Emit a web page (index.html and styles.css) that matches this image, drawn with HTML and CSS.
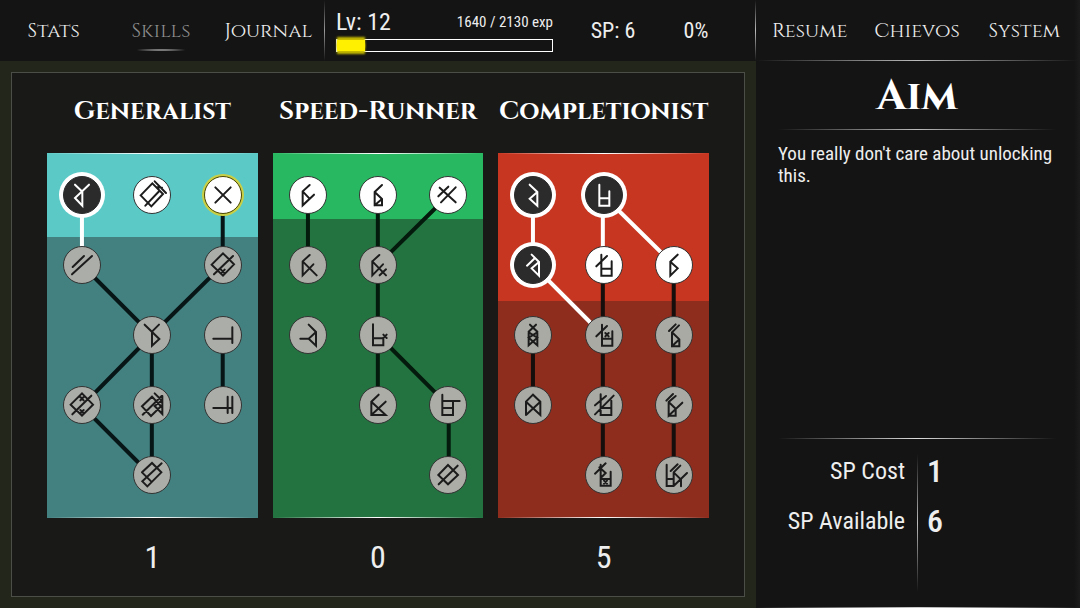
FILE: index.html
```html
<!DOCTYPE html>
<html lang="en">
<head>
<meta charset="utf-8">
<title>Skills</title>
<link rel="stylesheet" href="styles.css">
</head>
<body>
<div class="app">
  <section class="main">
    <header class="topbar">
      <nav class="tabs">
        <button class="tab">Stats</button>
        <button class="tab tab-active">Skills</button>
        <button class="tab">Journal</button>
      </nav>
      <div class="status">
        <div class="level">
          <div class="level-text"><span class="level-number">Lv: 12</span><span class="level-exp">1640 / 2130 exp</span></div>
          <div class="bar"><div class="bar-fill" style="width:13%"></div></div>
        </div>
        <span class="points">SP: 6</span>
        <span class="percent">0%</span>
      </div>
    </header>
    <main class="stage">
      <div class="frame">
        <section class="branch">
          <h2 class="branch-title">Generalist</h2>
          <div class="tree tree-teal" style="--open:23%">
            <svg class="edges" viewBox="0 0 211 365" preserveAspectRatio="none">
              <path d="M176 42V112L105 182L35 253L105 323M35 112L105 182V323M176 182V253"/>
              <path class="edge-owned" d="M35 42V100"/>
            </svg>
            <button class="node owned c1 r1" aria-label="Skill"><svg viewBox="-54 -54 108 108"><path d="M-21 -31L1 -10V32L-21 9L21 -31"/></svg></button>
            <button class="node open c2 r1" aria-label="Skill"><svg viewBox="-54 -54 108 108"><path d="M-34 1L1 -35L33 -3L-2 34ZM-20 32L22 -12M8 -41L42 -6M12 -24L30 -22"/></svg></button>
            <button class="node open selected c3 r1" aria-label="Aim"><svg viewBox="-54 -54 108 108"><path d="M-23 -23L23 23M23 -23L-23 23"/></svg></button>
            <button class="node c1 r2" aria-label="Skill"><svg viewBox="-54 -54 108 108"><path d="M-28 6L6 -27M-30 28L30 -27"/></svg></button>
            <button class="node c3 r2" aria-label="Skill"><svg viewBox="-54 -54 108 108"><path d="M0 -35L33 -2L0 32L-34 -1ZM30 -27L-27 28M-6 14L5 25M5 14L-6 25"/></svg></button>
            <button class="node c2 r3" aria-label="Skill"><svg viewBox="-54 -54 108 108"><path d="M-22 -31L22 12L0 32V-10L21 -31"/></svg></button>
            <button class="node c3 r3" aria-label="Skill"><svg viewBox="-54 -54 108 108"><path d="M-29 11H28M28 -23V24"/></svg></button>
            <button class="node c1 r4" aria-label="Skill"><svg viewBox="-54 -54 108 108"><path d="M0 -35L33 -1L0 32L-34 -1ZM28 -28L-29 28M-5 -24L5 -14M5 -24L-5 -14M-5 15L5 25M5 15L-5 25"/></svg></button>
            <button class="node c2 r4" aria-label="Skill"><svg viewBox="-54 -54 108 108"><path d="M-30 4L0 -25L27 4L-3 33ZM-28 29L29 -27M8 -35L31 -12M31 -27V27L8 3L31 -15"/></svg></button>
            <button class="node c3 r4" aria-label="Skill"><svg viewBox="-54 -54 108 108"><path d="M-29 9H28M28 -25V24M14 -25V24"/></svg></button>
            <button class="node c2 r5" aria-label="Skill"><svg viewBox="-54 -54 108 108"><path d="M-30 -8L0 -36L28 -8L-14 34L-29 19L29 -35M-30 -8L-2 20"/></svg></button>
          </div>
          <p class="branch-count">1</p>
        </section>
        <section class="branch">
          <h2 class="branch-title">Speed-Runner</h2>
          <div class="tree tree-green" style="--open:18%">
            <svg class="edges" viewBox="0 0 211 365" preserveAspectRatio="none">
              <path d="M35 42V112M105 42V253M176 42L105 112M105 182L176 253V323"/>
            </svg>
            <button class="node open c1 r1" aria-label="Skill"><svg viewBox="-54 -54 108 108"><path d="M5 -30L-16 -11V31L18 -1M-16 -11L4 10"/></svg></button>
            <button class="node open c2 r1" aria-label="Skill"><svg viewBox="-54 -54 108 108"><path d="M12 -30L-10 -9V31H12V12L-10 -9M-10 31L12 12"/></svg></button>
            <button class="node open c3 r1" aria-label="Skill"><svg viewBox="-54 -54 108 108"><path d="M-25 -22L23 22M23 -23L-21 22M-29 4L1 -25"/></svg></button>
            <button class="node c1 r2" aria-label="Skill"><svg viewBox="-54 -54 108 108"><path d="M5 -30L-16 -11V31L16 -2M-16 -11L26 31"/></svg></button>
            <button class="node c2 r2" aria-label="Skill"><svg viewBox="-54 -54 108 108"><path d="M4 -30L-17 -11V31L15 -2M-17 -11L24 31M24 13L5 31"/></svg></button>
            <button class="node c1 r3" aria-label="Skill"><svg viewBox="-54 -54 108 108"><path d="M2 -31L24 -9V32L2 11L24 -9M2 11H-23"/></svg></button>
            <button class="node c2 r3" aria-label="Skill"><svg viewBox="-54 -54 108 108"><path d="M-15 -32V31H16V8M-15 10H16M16 -1L26 9M26 -1L16 9"/></svg></button>
            <button class="node c2 r4" aria-label="Skill"><svg viewBox="-54 -54 108 108"><path d="M2 -31L-20 -10V30H23L-20 -10M-20 30L23 -10"/></svg></button>
            <button class="node c3 r4" aria-label="Skill"><svg viewBox="-54 -54 108 108"><path d="M-17 -31V30H15V-12M-17 -12H35M-17 9H15"/></svg></button>
            <button class="node c3 r5" aria-label="Skill"><svg viewBox="-54 -54 108 108"><path d="M0 -30L30 0L0 28L-29 0ZM29 -28L-28 28"/></svg></button>
          </div>
          <p class="branch-count">0</p>
        </section>
        <section class="branch">
          <h2 class="branch-title">Completionist</h2>
          <div class="tree tree-red" style="--open:40.5%">
            <svg class="edges" viewBox="0 0 211 365" preserveAspectRatio="none">
              <path d="M105 112V323M176 112V323M35 182V253"/>
              <path class="edge-owned" d="M35 42V112L94 171M105 42V100M105 42L166 102"/>
            </svg>
            <button class="node owned c1 r1" aria-label="Skill"><svg viewBox="-54 -54 108 108"><path d="M-10 -31L13 -9V32L-10 11L13 -9"/></svg></button>
            <button class="node owned c2 r1" aria-label="Skill"><svg viewBox="-54 -54 108 108"><path d="M-14 -31V32H16V-11M-14 10H16"/></svg></button>
            <button class="node owned c1 r2" aria-label="Skill"><svg viewBox="-54 -54 108 108"><path d="M-4 -31L18 -9V32L-4 10L18 -9M-18 2L6 -21"/></svg></button>
            <button class="node open c2 r2" aria-label="Skill"><svg viewBox="-54 -54 108 108"><path d="M-8 -31V32H23V-11M-8 11H23M-23 4L9 -27"/></svg></button>
            <button class="node open c3 r2" aria-label="Skill"><svg viewBox="-54 -54 108 108"><path d="M11 -31L-11 -10V32L11 10L-11 -10"/></svg></button>
            <button class="node c1 r3" aria-label="Skill"><svg viewBox="-54 -54 108 108"><path d="M-9 -31L13 -10V31L-13 8L13 -8M9 -31L-13 -10V31L13 8L-13 -8"/></svg></button>
            <button class="node c2 r3" aria-label="Skill"><svg viewBox="-54 -54 108 108"><path d="M-6 -31V32H25V-11M-6 11H25M-23 4L9 -27M4 -6L14 4M14 -6L4 4"/></svg></button>
            <button class="node c3 r3" aria-label="Skill"><svg viewBox="-54 -54 108 108"><path d="M15 -29L-6 -8V34H16V13L-6 -8M-6 34L16 13M-15 -12L5 -32"/></svg></button>
            <button class="node c1 r4" aria-label="Skill"><svg viewBox="-54 -54 108 108"><path d="M-21 30V-10L0 -31L22 -10V30L-21 -10M-21 30L22 -10"/></svg></button>
            <button class="node c2 r4" aria-label="Skill"><svg viewBox="-54 -54 108 108"><path d="M-10 -32V30H22V-13M-10 9H22M-27 1L6 -27M-27 28L29 -28"/></svg></button>
            <button class="node c3 r4" aria-label="Skill"><svg viewBox="-54 -54 108 108"><path d="M5 -27L-16 -9V32L25 -7M-16 -9L5 11V32H-16M-23 -13L-3 -33"/></svg></button>
            <button class="node c2 r5" aria-label="Skill"><svg viewBox="-54 -54 108 108"><path d="M-10 -31V32H20V-10M-10 12H20M-27 -4L5 -35M-14 -23L5 -6L-10 9M0 17L9 26M9 17L0 26"/></svg></button>
            <button class="node c3 r5" aria-label="Skill"><svg viewBox="-54 -54 108 108"><path d="M-22 -31V33H-1L39 -6M-22 12H-1M19 -28L-1 -8V33M-1 -8L21 14V34M-10 -12L11 -32"/></svg></button>
          </div>
          <p class="branch-count">5</p>
        </section>
      </div>
    </main>
  </section>
  <aside class="side">
    <nav class="menu">
      <button class="tab">Resume</button>
      <button class="tab">Chievos</button>
      <button class="tab">System</button>
    </nav>
    <h1 class="skill-title">Aim</h1>
    <p class="skill-text">You really don't care about unlocking this.</p>
    <dl class="costs">
      <dt>SP Cost</dt><dd>1</dd>
      <dt>SP Available</dt><dd>6</dd>
    </dl>
  </aside>
</div>
</body>
</html>
```

FILE: styles.css
```css
* { box-sizing: border-box; }

body {
  margin: 0;
  background: #141414;
  color: #eee;
  font-family: "Roboto Condensed", "Liberation Sans Narrow", Roboto, sans-serif;
}

h1, h2, p, dl, dd { margin: 0; }

button {
  padding: 0;
  border: 0;
  background: none;
  color: inherit;
  cursor: pointer;
}

.app {
  display: grid;
  grid-template-columns: 7fr 3fr;
  min-height: 100vh;
}

.main { display: flex; flex-direction: column; }

.topbar {
  display: grid;
  grid-template-columns: 3fr 4fr;
  height: 61px;
  background: #141414;
}

.tabs {
  display: grid;
  grid-template-columns: repeat(3, 1fr);
  padding-right: 2px;
}

.tab {
  font-family: Cinzel, "Liberation Serif", serif;
  font-size: 20px;
  font-weight: 500;
}

.tab-active {
  color: #8c8c8c;
  background: radial-gradient(closest-side, #ddd, transparent) center 49px / 56px 2px no-repeat;
}

.status {
  display: flex;
  align-items: center;
  padding-left: 12px;
  background:
    linear-gradient(transparent, #999, transparent) left / 1px 100% no-repeat,
    linear-gradient(transparent, #bbb, transparent) right / 1px 100% no-repeat;
}

.level { width: 217px; }

.level-text {
  display: flex;
  justify-content: space-between;
  align-items: center;
  line-height: 26px;
}

.level-number { font-size: 24px; }
.level-exp { font-size: 15px; }

.bar {
  height: 13px;
  margin-top: 4px;
  border: 1px solid #fff;
}

.bar-fill {
  height: 11px;
  background: #fff000;
  box-shadow: 0 3px 2px #c4b900, 0 -3px 2px #c4b900;
}

.points { width: 120px; font-size: 22px; text-align: center; }
.percent { width: 46px; font-size: 22px; text-align: center; }

.stage {
  display: flex;
  flex: 1;
  padding: 11px;
  background: #23271b;
}

.frame {
  display: grid;
  grid-template-columns: repeat(3, 1fr);
  flex: 1;
  gap: 15px;
  padding: 20px 35px 0 35px;
  border: 1px solid #4b4d47;
  background: #191a18;
}

.branch-title {
  display: flex;
  justify-content: center;
  height: 60px;
  font: 600 26px/38px Cinzel, "Liberation Serif", serif;
  color: #fff;
  white-space: nowrap;
}

.branch-count {
  padding-top: 20px;
  font-size: 32px;
  line-height: 38px;
  text-align: center;
}

.tree {
  position: relative;
  display: grid;
  grid-template-columns: repeat(3, 1fr);
  grid-template-rows: repeat(5, 70px);
  place-items: center;
  padding: 7px 0 8px;
  background: linear-gradient(var(--light) var(--open), var(--dark) var(--open));
}

.tree::before,
.tree::after {
  content: "";
  position: absolute;
  left: 0;
  right: 0;
  height: 1px;
  background: linear-gradient(90deg, transparent, #fff, transparent);
}

.tree::before { top: 0; }
.tree::after { bottom: 0; }

.tree-teal { --light: #5bcac7; --dark: #428180; --edge: #071516; --off: #abada8; }
.tree-green { --light: #28b861; --dark: #237341; --edge: #041a0c; --off: #adada8; }
.tree-red { --light: #c63620; --dark: #8e2d1e; --edge: #150e0d; --off: #a9aaa3; }

.edges {
  position: absolute;
  inset: 0;
  width: 100%;
  height: 100%;
  fill: none;
  stroke: var(--edge);
  stroke-width: 4;
}

.edge-owned { stroke: #fff; }

.node {
  position: relative;
  width: 38px;
  height: 38px;
  border: 1px solid #333;
  border-radius: 50%;
  background: var(--off);
  color: #1c1c1c;
}

.node svg {
  display: block;
  width: 100%;
  fill: none;
  stroke: currentColor;
  stroke-width: 6;
  stroke-linecap: round;
}

.open { background: #fff; }

.selected {
  border-color: #4a4700;
  box-shadow: 0 0 0 2px #c9cf45;
}

.owned {
  border-color: #2b2b2b;
  background: #2b2b2b;
  box-shadow: 0 0 0 4px #fff;
  color: #fff;
}

.c1 { grid-column: 1; }
.c2 { grid-column: 2; }
.c3 { grid-column: 3; }
.r1 { grid-row: 1; }
.r2 { grid-row: 2; }
.r3 { grid-row: 3; }
.r4 { grid-row: 4; }
.r5 { grid-row: 5; }

.side {
  display: flex;
  flex-direction: column;
  padding: 0 2px 0 0;
  background:
    linear-gradient(90deg, transparent, #ccc, transparent) bottom / 100% 1px no-repeat,
    linear-gradient(90deg, transparent, #1c1c1c) right / 6px 100% no-repeat,
    #141414;
}

.menu {
  display: grid;
  grid-template-columns: repeat(3, 1fr);
  height: 61px;
  background: linear-gradient(90deg, transparent, #bbb, transparent) bottom / 100% 1px no-repeat;
}

.skill-title {
  height: 69px;
  margin: 0 22px;
  background: linear-gradient(90deg, transparent, #bbb, transparent) bottom / 100% 1px no-repeat;
  font: bold 42px/72px Cinzel, "Liberation Serif", serif;
  color: #fff;
  text-align: center;
}

.skill-text {
  padding: 13px 16px 13px 22px;
  font-size: 19px;
  line-height: 22px;
}

.costs {
  display: grid;
  grid-template-columns: 1fr 1fr;
  grid-auto-rows: 50px;
  align-items: center;
  height: 170px;
  margin: auto 22px 0;
  padding-top: 8px;
  background:
    linear-gradient(90deg, transparent, #ddd, transparent) top / 100% 1px no-repeat,
    linear-gradient(transparent, #bbb, transparent) center 16px / 1px 138px no-repeat;
}

.costs dt { padding-right: 12px; font-size: 24px; text-align: right; }
.costs dd { padding-left: 10px; font-size: 32px; font-weight: 500; }
```
